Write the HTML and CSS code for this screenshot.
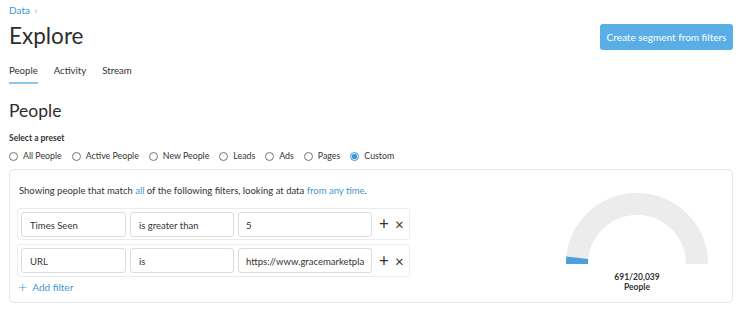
FILE: index.html
```html
<!DOCTYPE html>
<html lang="en">
<head>
  <meta charset="UTF-8">
  <title>Explore</title>
  <link rel="stylesheet" href="styles.css">
</head>
<body>

  <div class="page">
    <div class="top">
      <div>
        <div class="crumb"><a href="#">Data</a> <span class="sep">&rsaquo;</span></div>
        <h1>Explore</h1>
      </div>
      <button class="primary">Create segment from filters</button>
    </div>

    <!-- Tabs -->
    <div class="tabs">
      <a href="#" class="tab active">People</a>
      <a href="#" class="tab">Activity</a>
      <a href="#" class="tab">Stream</a>
    </div>

    <h2>People</h2>
    <div class="preset-label">Select a preset</div>
    <div class="presets">
      <label><input type="radio" name="preset"> All People</label>
      <label><input type="radio" name="preset"> Active People</label>
      <label><input type="radio" name="preset"> New People</label>
      <label><input type="radio" name="preset"> Leads</label>
      <label><input type="radio" name="preset"> Ads</label>
      <label><input type="radio" name="preset"> Pages</label>
      <label><input type="radio" name="preset" checked> Custom</label>
    </div>

    <div class="card">
      <div class="filters">
        <p class="summary">Showing people that match <a href="#">all</a> of the following filters, looking at data <a href="#">from any time</a>.</p>

        <div class="filter-row">
          <div class="field f-prop">Times Seen</div>
          <div class="field f-op">is greater than</div>
          <div class="field f-val">5</div>
          <span class="act plus">+</span>
          <span class="act times">&times;</span>
        </div>
        <div class="filter-row">
          <div class="field f-prop">URL</div>
          <div class="field f-op">is</div>
          <div class="field f-val">https://www.gracemarketpla</div>
          <span class="act plus">+</span>
          <span class="act times">&times;</span>
        </div>

        <a href="#" class="add-filter"><span class="add-plus">+</span> Add filter</a>
      </div>

      <!-- Gauge -->
      <div class="gauge">
        <svg width="142" height="72" viewBox="0 0 142 72">
          <path d="M 11 71 A 60 60 0 0 1 131 71" fill="none" stroke="#ececec" stroke-width="22"/>
          <path d="M 11 71 A 60 60 0 0 1 11.33 64.73" fill="none" stroke="#4a9fdc" stroke-width="22"/>
        </svg>
        <div class="gauge-count">691/20,039</div>
        <div class="gauge-label">People</div>
      </div>
    </div>
  </div>

</body>
</html>
```

FILE: styles.css
```css
body {
  margin: 0;
  font-family: Lato, 'Open Sans', sans-serif;
  color: #333;
  background: white;
}

a {
  color: #3d97d6;
  text-decoration: none;
}

.page {
  padding: 3px 7px 0 9px;
}

.top {
  display: flex;
  justify-content: space-between;
  align-items: flex-start;
}

.crumb {
  font-size: 10px;
  line-height: 14px;
}

.crumb .sep {
  color: #aaa;
  margin-left: 2px;
}

h1 {
  margin: 4px 0 0 0;
  font-size: 22.5px;
  font-weight: 400;
  line-height: 30px;
  color: #2d2d2d;
}

.primary {
  margin-top: 21px;
  width: 133px;
  height: 26px;
  background-color: #5aaee6;
  border: none;
  border-radius: 3px;
  color: white;
  font-family: Lato, sans-serif;
  font-size: 10px;
  padding: 0;
  cursor: pointer;
}

.tabs {
  display: flex;
  gap: 16px;
  margin-top: 13px;
}

.tab {
  color: #333;
  font-size: 9.6px;
  line-height: 14px;
  padding-bottom: 4px;
  border-bottom: 2px solid transparent;
}

.tab.active {
  border-bottom-color: #8cc6ec;
}

h2 {
  margin: 15px 0 0 0;
  font-size: 17.5px;
  font-weight: 400;
  line-height: 24px;
  color: #2d2d2d;
}

.preset-label {
  margin-top: 9px;
  font-size: 8.5px;
  font-weight: 700;
  line-height: 12px;
}

.presets {
  display: flex;
  gap: 10px;
  margin-top: 6px;
  font-size: 8.8px;
  line-height: 12px;
}

.presets label {
  display: flex;
  align-items: center;
  gap: 5px;
}

.presets input {
  margin: 0;
  width: 9px;
  height: 9px;
  accent-color: #3d97d6;
}

.card {
  display: flex;
  justify-content: space-between;
  margin-top: 7px;
  height: 134px;
  border: 1px solid #e6e6e6;
  border-radius: 5px;
  box-sizing: border-box;
  padding: 0 24px 0 7px;
}

.filters {
  width: 393px;
}

.summary {
  margin: 14px 0 0 2px;
  font-size: 9.5px;
  line-height: 14px;
}

.filter-row {
  display: flex;
  align-items: center;
  margin-top: 10px;
  height: 32px;
  box-sizing: border-box;
  border: 1px solid #ececec;
  border-radius: 3px;
  padding: 0 3px;
}

.filter-row + .filter-row {
  margin-top: 4px;
  height: 33px;
}

.field {
  height: 25px;
  line-height: 25px;
  box-sizing: border-box;
  border: 1px solid #dcdcdc;
  border-radius: 3px;
  padding-left: 8px;
  font-size: 9.5px;
  margin-right: 4px;
  white-space: nowrap;
  overflow: hidden;
}

.f-prop { width: 105px; }
.f-op { width: 104px; }
.f-val { width: 134px; padding-left: 7px; }

.act {
  color: #333;
  line-height: 14px;
}

.plus {
  font-size: 17px;
  margin-left: 3px;
}

.times {
  font-size: 15px;
  margin-left: 6px;
}

.add-filter {
  display: inline-flex;
  align-items: center;
  gap: 5px;
  margin: 2px 0 0 1px;
  font-size: 10px;
  line-height: 14px;
}

.add-plus {
  font-size: 16px;
  font-weight: 300;
}

.gauge {
  margin-top: 23px;
  width: 142px;
  text-align: center;
  font-size: 8.5px;
  font-weight: 700;
  line-height: 10px;
}

.gauge svg {
  display: block;
}

.gauge-count {
  margin-top: 7px;
}
```
